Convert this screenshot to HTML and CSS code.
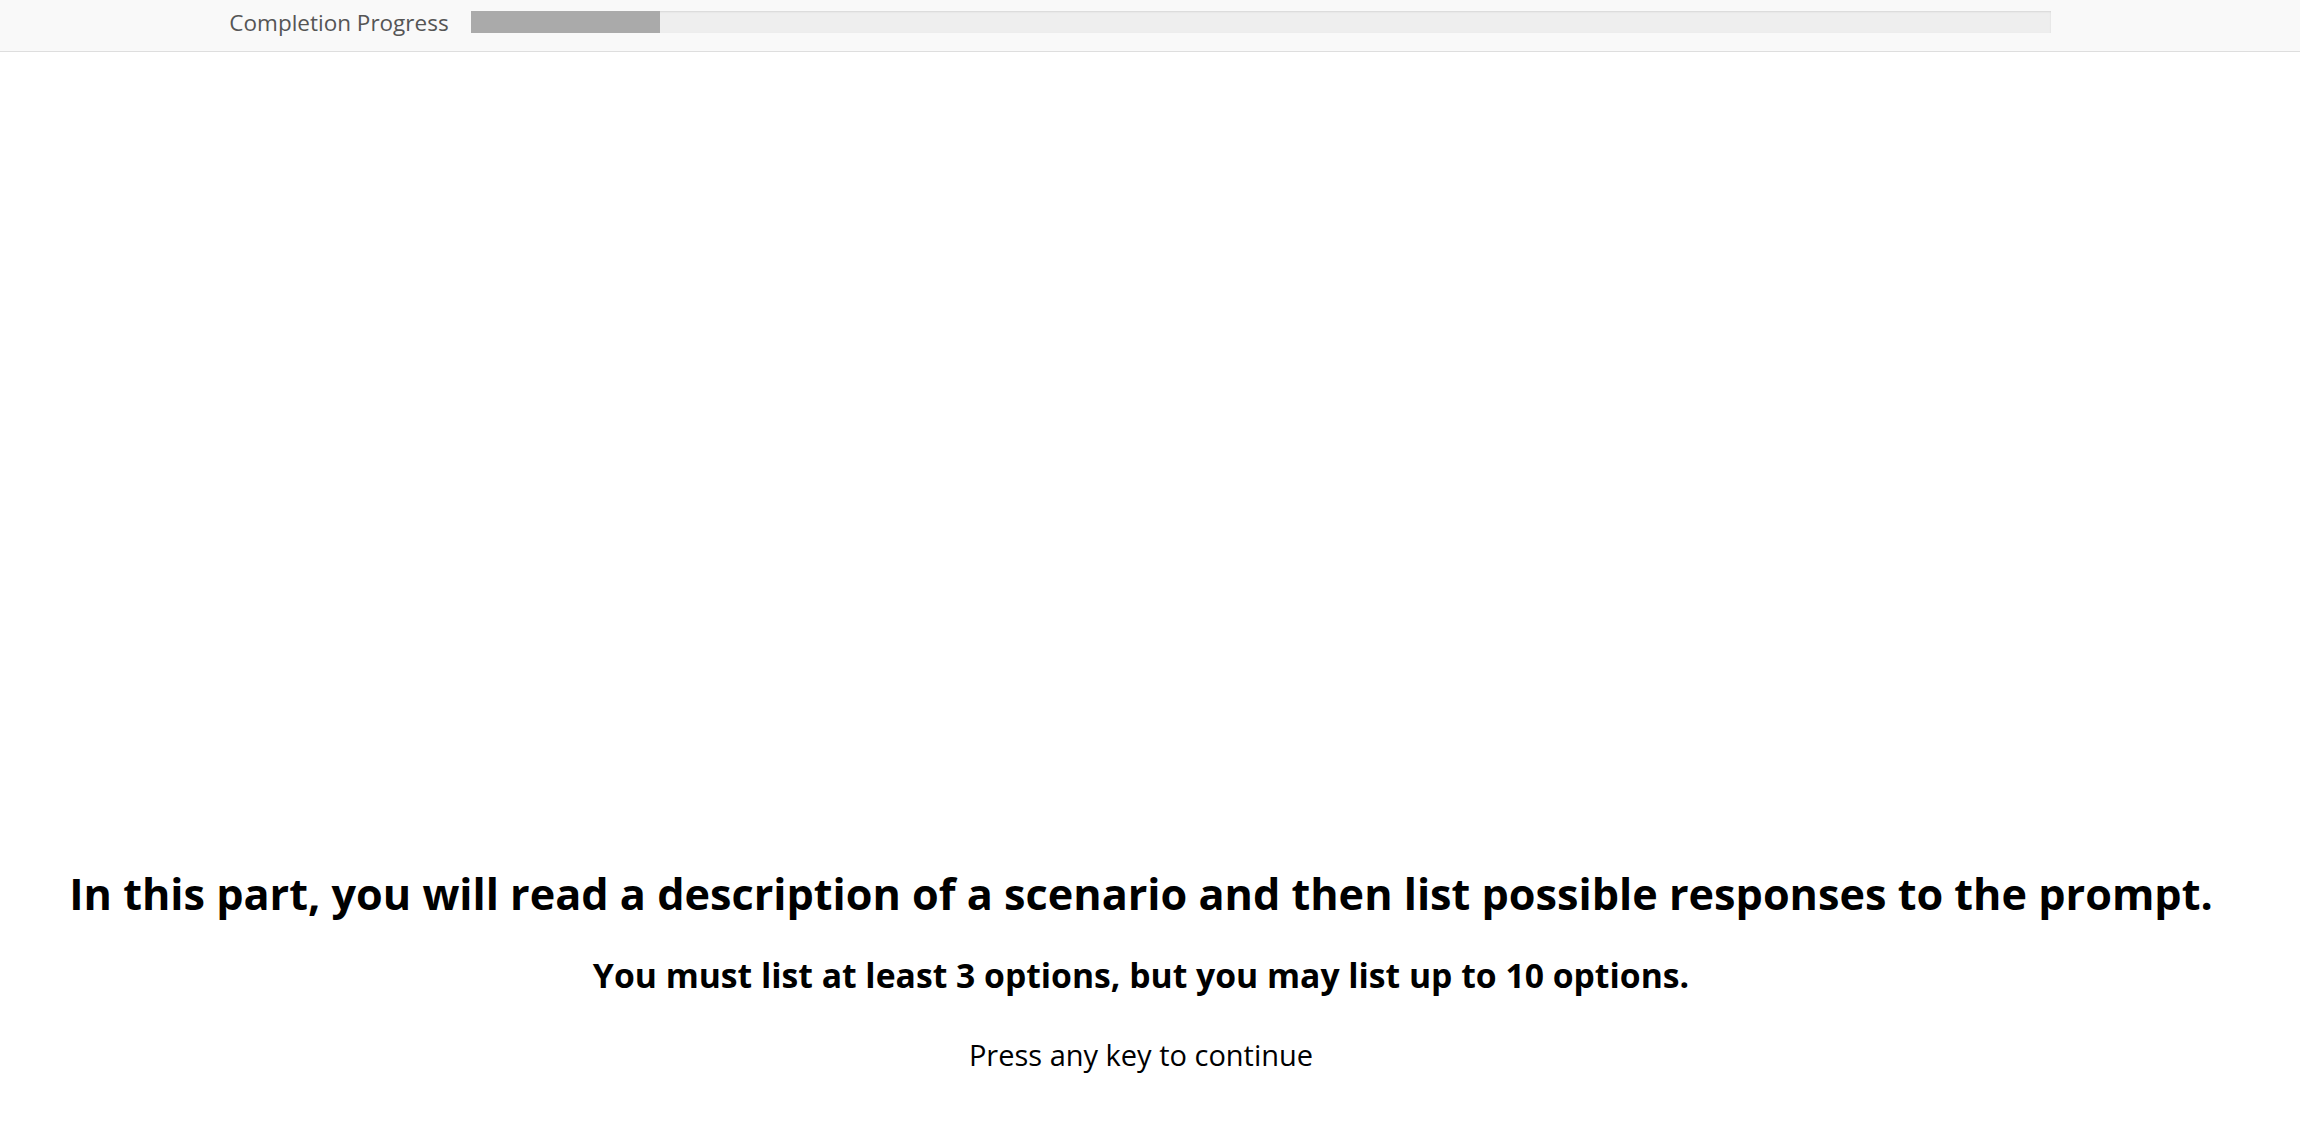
FILE: index.html
```html
<!DOCTYPE html>
<html>
<head>
<meta charset="utf-8">
<link rel="stylesheet" href="styles.css">
</head>
<body>
<div class="progress">
  <span class="progress-label">Completion Progress</span>
  <div class="progress-outer"><div class="progress-inner" style="width: 12%"></div></div>
</div>
<main class="content">
  <h2 class="title">In this part, you will read a description of a scenario and then list possible responses to the prompt.</h2>
  <h3 class="subtitle">You must list at least 3 options, but you may list up to 10 options.</h3>
  <p class="hint">Press any key to continue</p>
</main>
</body>
</html>
```
FILE: styles.css
```css
html, body {
  margin: 0;
  padding: 0;
  height: 100%;
}
body {
  font-family: "Open Sans", "Liberation Sans", sans-serif;
  color: #000;
  background: #fff;
  display: flex;
  flex-direction: column;
}
.progress {
  box-sizing: border-box;
  height: 52px;
  background: #f9f9f9;
  border-bottom: 1px solid #dedede;
  display: flex;
  align-items: center;
  justify-content: center;
  padding-right: 20px;
  padding-bottom: 7px;
}
.progress-label {
  color: #555;
  font-size: 22.5px;
  padding-right: 22px;
}
.progress-outer {
  width: 1580px;
  height: 22px;
  background: #eee;
  box-shadow: inset 0 1px 2px rgba(0,0,0,0.1);
}
.progress-inner {
  height: 100%;
  background: #aaa;
}
.content {
  flex: 1;
  display: flex;
  flex-direction: column;
  justify-content: flex-end;
  align-items: center;
  text-align: center;
  padding-bottom: 46px;
  padding-right: 18px;
}
.title {
  font-size: 43.2px;
  font-weight: 700;
  margin: 0;
  line-height: 1.6;
}
.subtitle {
  font-size: 33.7px;
  font-weight: 700;
  margin: 21px 0 0;
  line-height: 1.6;
}
.hint {
  font-size: 29px;
  margin: 29px 0 0;
  line-height: 1.6;
}
```
